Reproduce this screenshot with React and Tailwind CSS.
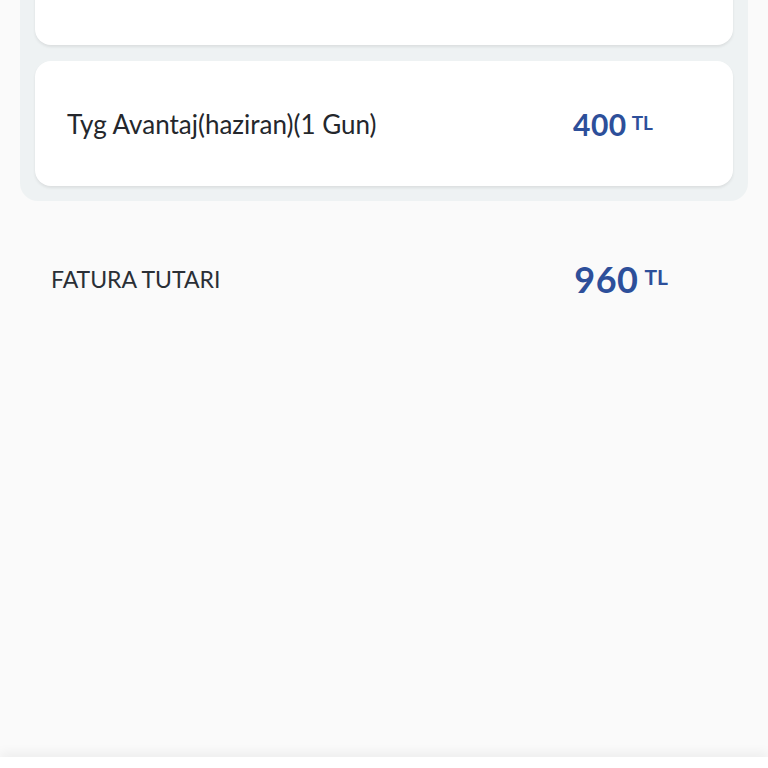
export default function App() {
  return (
    <div className="w-[768px] h-[768px] bg-[#fafafa] flex flex-col overflow-hidden" style={{ fontFamily: "Lato, 'Noto Sans', sans-serif" }}>
      <div className="mx-[20px] mt-[-40px] bg-[#eef2f3] rounded-b-[18px] px-[15px] pt-[15px] pb-[15px] flex flex-col gap-[16px]">
        <div className="h-[70px] bg-white rounded-[16px] shadow-[0_2px_3px_rgba(0,0,0,0.08)]" />
        <div className="h-[125px] bg-white rounded-[16px] shadow-[0_2px_3px_rgba(0,0,0,0.08)] flex items-center pl-[32px] pr-[80px]">
          <span className="text-[26px] text-[#24272c] flex-1 leading-none">Tyg Avantaj(haziran)(1 Gun)</span>
          <span className="flex items-start gap-[5px] text-[#2d4f9a] font-bold leading-none">
            <span className="text-[30px] tracking-[0.5px]">400</span>
            <span className="text-[19px] mt-[4px]">TL</span>
          </span>
        </div>
      </div>
      <div className="flex items-center pl-[51px] pr-[100px] mt-[60px]">
        <span className="text-[23px] text-[#2a2f36] flex-1 leading-none">FATURA TUTARI</span>
        <span className="flex items-start gap-[6px] text-[#2d4f9a] font-bold leading-none">
          <span className="text-[36px] tracking-[0.5px]">960</span>
          <span className="text-[21px] mt-[5px]">TL</span>
        </span>
      </div>
      <div className="flex-1" />
      <div className="h-[11px] bg-white shadow-[0_-4px_12px_rgba(0,0,0,0.06)]" />
    </div>
  );
}
